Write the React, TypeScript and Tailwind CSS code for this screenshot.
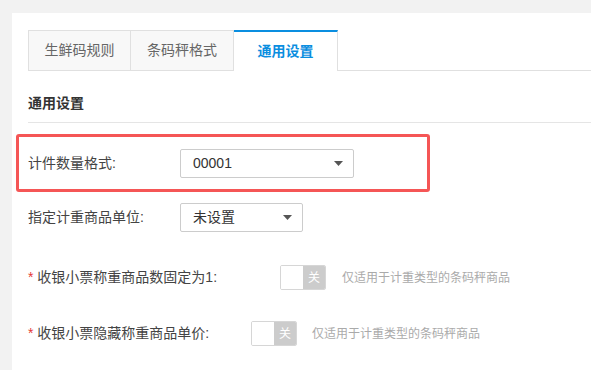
import React from "react";

const font = "font-['Liberation_Sans','Noto_Sans_CJK_SC',sans-serif]";

function Caret() {
  return (
    <svg width="9" height="5" viewBox="0 0 9 5" className="shrink-0">
      <path d="M0 0 H9 L4.5 5 Z" fill="#555" />
    </svg>
  );
}

function Select({ value, width }: { value: string; width: string }) {
  return (
    <div
      className={`flex h-[29px] items-center justify-between rounded-[2px] border border-[#cccccc] bg-white pl-[12px] pr-[10px] text-[14px] text-[#333] ${width}`}
    >
      <span>{value}</span>
      <Caret />
    </div>
  );
}

function Toggle() {
  return (
    <div className="flex h-[25px] w-[46px] overflow-hidden rounded-[2px] border border-[#d6d6d6]">
      <div className="w-[22px] bg-white" />
      <div className="flex flex-1 items-center justify-center bg-[#cccccc] text-[12px] text-white">关</div>
    </div>
  );
}

export default function App() {
  const tabs = ["生鲜码规则", "条码秤格式", "通用设置"];
  return (
    <div className={`h-[370px] w-[591px] overflow-hidden bg-[#f2f2f2] pl-[12px] pt-[13px] ${font}`}>
      <div className="h-full bg-white pl-[16px] pt-[17px]">
        {/* tabs */}
        <div className="flex h-[41px]">
          {tabs.map((t, i) =>
            i === 2 ? (
              <div
                key={t}
                className="flex w-[104px] items-center justify-center border-t-2 border-r border-[#e0e0e0] border-t-[#0a8ee0] bg-white text-[14px] font-bold text-[#0a8ee0]"
              >
                {t}
              </div>
            ) : (
              <div
                key={t}
                className={`flex w-[103px] items-center justify-center border-y border-r border-[#e0e0e0] bg-[#f8f8f8] text-[14px] text-[#666] ${i === 0 ? "border-l" : ""}`}
              >
                {t}
              </div>
            )
          )}
          <div className="flex-1 border-b border-[#e0e0e0]" />
        </div>

        {/* section heading */}
        <div className="mt-[22px] border-b border-[#e5e5e5] pb-[9px] text-[14px] font-bold leading-[20px] text-[#333]">
          通用设置
        </div>

        {/* highlighted row */}
        <div className="ml-[-12px] mt-[11px] flex h-[58px] w-[414px] items-center rounded-[3px] border-[3px] border-[#f55656] pl-[9px]">
          <div className="w-[152px] text-[14px] text-[#444]">计件数量格式:</div>
          <Select value="00001" width="w-[174px]" />
        </div>

        <div className="mt-[11px] flex items-center">
          <div className="w-[152px] text-[14px] text-[#444]">指定计重商品单位:</div>
          <Select value="未设置" width="w-[123px]" />
        </div>

        <div className="mt-[33px] flex items-center">
          <div className="w-[252px] text-[14px] text-[#444]">
            <span className="text-[#e53935]">*</span> 收银小票称重商品数固定为1:
          </div>
          <Toggle />
          <div className="ml-[16px] text-[12px] text-[#aaa]">仅适用于计重类型的条码秤商品</div>
        </div>

        <div className="mt-[31px] flex items-center">
          <div className="w-[223px] text-[14px] text-[#444]">
            <span className="text-[#e53935]">*</span> 收银小票隐藏称重商品单价:
          </div>
          <Toggle />
          <div className="ml-[15px] text-[12px] text-[#aaa]">仅适用于计重类型的条码秤商品</div>
        </div>
      </div>
    </div>
  );
}
